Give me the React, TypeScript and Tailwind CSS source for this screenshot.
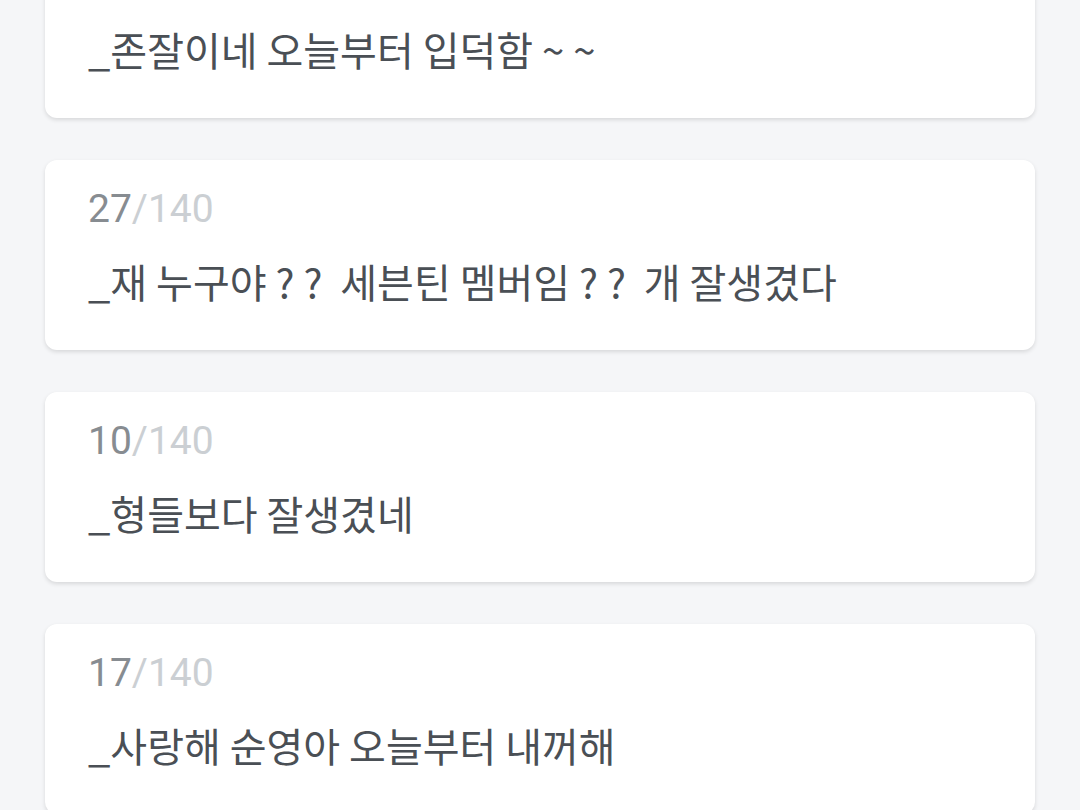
import React from "react";

const items = [
  { n: 12, text: "_존잘이네 오늘부터 입덕함 ~ ~" },
  { n: 27, text: "_재 누구야 ? ?  세븐틴 멤버임 ? ?  개 잘생겼다" },
  { n: 10, text: "_형들보다 잘생겼네" },
  { n: 17, text: "_사랑해 순영아 오늘부터 내꺼해" },
];

export default function App() {
  return (
    <div
      className="h-[810px] overflow-hidden bg-[#f5f6f8]"
      style={{ fontFamily: '"Noto Sans CJK KR", "Noto Sans", sans-serif' }}
    >
      <div className="flex flex-col gap-[42px] px-[45px] -mt-[72px]">
        {items.map((it, i) => (
          <div
            key={i}
            className="h-[190px] shrink-0 rounded-[12px] bg-white pl-[43px] pt-[23px] shadow-[0_2px_4px_rgba(0,0,0,0.12)] whitespace-pre"
          >
            <div className="font-['Roboto',sans-serif] text-[39px] leading-[52px]">
              <span className="text-[#878c91]">{it.n}</span>
              <span className="text-[#cbcfd3]">/140</span>
            </div>
            <div className="mt-[20px] text-[40px] leading-[52px] text-[#4a4f55]">{it.text}</div>
          </div>
        ))}
      </div>
    </div>
  );
}
